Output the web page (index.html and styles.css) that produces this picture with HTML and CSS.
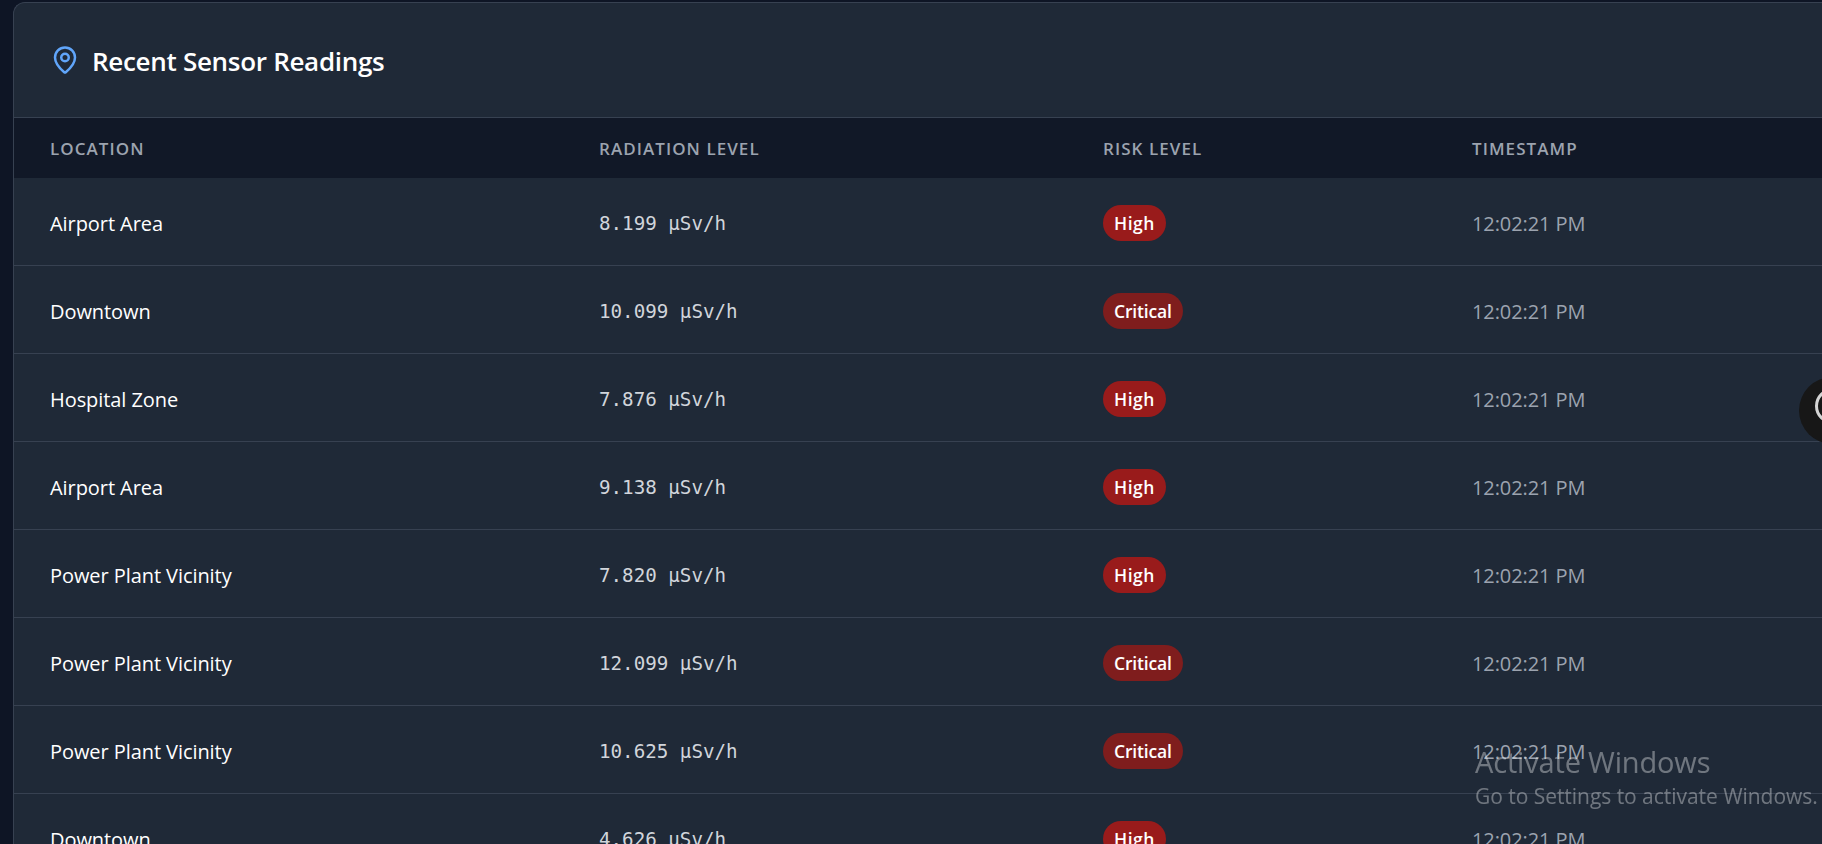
FILE: index.html
```html
<!DOCTYPE html>
<html lang="en">
<head>
<meta charset="utf-8">
<title>Recent Sensor Readings</title>
<link rel="stylesheet" href="styles.css">
</head>
<body>
<main class="card">
  <header class="card-head">
    <svg class="pin" viewBox="0 0 24 24" fill="none" stroke="#60a5fa" stroke-width="2" stroke-linecap="round" stroke-linejoin="round"><path d="M20 10c0 5-5.5 10.2-7.4 11.8a1 1 0 0 1-1.2 0C9.500 20.200 4 15 4 10a8 8 0 0 1 16 0"/><circle cx="12" cy="10" r="3"/></svg>
    <h2 class="title">Recent Sensor Readings</h2>
  </header>
  <div class="row thead">
    <div>LOCATION</div><div>RADIATION LEVEL</div><div>RISK LEVEL</div><div>TIMESTAMP</div>
  </div>
  <div class="row"><div class="loc">Airport Area</div><div class="val">8.199 µSv/h</div><div><span class="badge high">High</span></div><div class="time">12:02:21 PM</div></div>
  <div class="row"><div class="loc">Downtown</div><div class="val">10.099 µSv/h</div><div><span class="badge crit">Critical</span></div><div class="time">12:02:21 PM</div></div>
  <div class="row"><div class="loc">Hospital Zone</div><div class="val">7.876 µSv/h</div><div><span class="badge high">High</span></div><div class="time">12:02:21 PM</div></div>
  <div class="row"><div class="loc">Airport Area</div><div class="val">9.138 µSv/h</div><div><span class="badge high">High</span></div><div class="time">12:02:21 PM</div></div>
  <div class="row"><div class="loc">Power Plant Vicinity</div><div class="val">7.820 µSv/h</div><div><span class="badge high">High</span></div><div class="time">12:02:21 PM</div></div>
  <div class="row"><div class="loc">Power Plant Vicinity</div><div class="val">12.099 µSv/h</div><div><span class="badge crit">Critical</span></div><div class="time">12:02:21 PM</div></div>
  <div class="row"><div class="loc">Power Plant Vicinity</div><div class="val">10.625 µSv/h</div><div><span class="badge crit">Critical</span></div><div class="time">12:02:21 PM</div></div>
  <div class="row"><div class="loc">Downtown</div><div class="val">4.626 µSv/h</div><div><span class="badge high">High</span></div><div class="time">12:02:21 PM</div></div>
</main>
<div class="float-btn"><span class="float-ring"></span></div>
<aside class="watermark">
  <div class="wm-title">Activate Windows</div>
  <div class="wm-sub">Go to Settings to activate Windows.</div>
</aside>
</body>
</html>
```
FILE: styles.css
```css
* { box-sizing: border-box; }
html, body { height: 100%; }
body {
  margin: 0;
  height: 844px;
  overflow: hidden;
  background: #0e1525;
  padding: 2px 0 0 13px;
  font-family: "Open Sans", "Noto Sans", sans-serif;
}
.card {
  width: 1900px;
  background: #1f2937;
  border: 1px solid #374151;
  border-right: 0;
  border-bottom: 0;
  border-top-left-radius: 12px;
  overflow: hidden;
}
.card-head {
  height: 115px;
  display: flex;
  align-items: center;
  gap: 12px;
  padding-left: 36px;
  border-bottom: 1px solid #374151;
}
.pin { width: 30px; height: 30px; flex: none; }
.title {
  margin: 2px 0 0;
  color: #fff;
  font-size: 26px;
  font-weight: 600;
  letter-spacing: -0.3px;
}
.row {
  display: grid;
  grid-template-columns: 549px 504px 369px 1fr;
  height: 88px;
  align-items: center;
  padding: 3px 0 0 36px;
  border-bottom: 1px solid #374151;
}
.thead {
  height: 60px;
  padding-top: 0;
  background: #111827;
  border-bottom: 0;
  color: #9ca3af;
  font-size: 17px;
  font-weight: 600;
  letter-spacing: 1.05px;
}
.loc { color: #fff; font-size: 20px; letter-spacing: -0.07px; }
.val {
  color: #d1d5db;
  font-family: "DejaVu Sans Mono", "Liberation Mono", monospace;
  font-size: 19.200px;
}
.badge {
  display: inline-block;
  height: 36px;
  line-height: 36px;
  padding: 0 11px;
  border-radius: 18px;
  color: #fff;
  font-size: 17.500px;
  font-weight: 600;
}
.high { background: #991b1b; letter-spacing: 0.5px; }
.crit { background: #7f1d1d; letter-spacing: -0.15px; }
.time { color: #9ca3af; font-size: 20px; letter-spacing: -0.09px; }
.float-btn {
  position: fixed;
  left: 1799px;
  top: 377px;
  width: 67px;
  height: 67px;
  border-radius: 50%;
  background: #171717;
  display: flex;
  align-items: center;
  justify-content: center;
}
.float-ring {
  width: 36px;
  height: 36px;
  margin-bottom: 9px;
  border: 3px solid #d4d4d4;
  border-radius: 50%;
}
.watermark {
  position: fixed;
  left: 1475px;
  top: 744px;
  color: rgba(255, 255, 255, 0.36);
}
.wm-title { font-size: 29px; line-height: 35px; letter-spacing: -0.17px; }
.wm-sub { font-size: 21px; line-height: 35px; letter-spacing: -0.04px; white-space: nowrap; }
```
